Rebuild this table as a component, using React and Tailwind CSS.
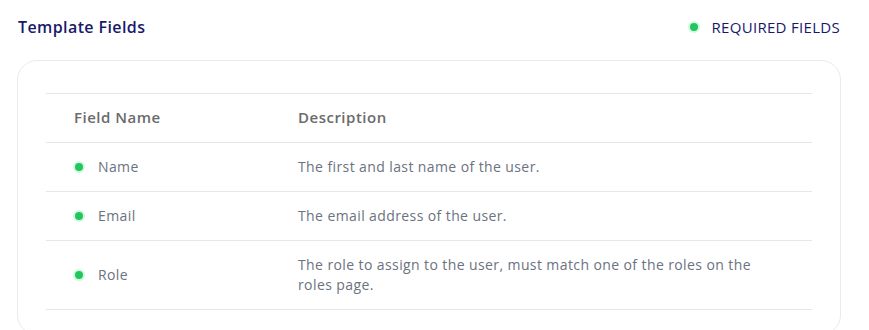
const fields = [
  { name: 'Name', description: 'The first and last name of the user.' },
  { name: 'Email', description: 'The email address of the user.' },
  {
    name: 'Role',
    description: 'The role to assign to the user, must match one of the roles on the roles page.',
  },
];

function Dot() {
  return <span className="inline-block w-2 h-2 rounded-full bg-[#22c55e] ring-2 ring-[#d1fadf]" />;
}

export default function App() {
  return (
    <div className="min-h-screen bg-white font-['Open_Sans',sans-serif] px-[17px] pt-[15px]">
      <div className="flex items-center justify-between w-[823px]">
        <h2 className="text-[16px] font-semibold tracking-[0.4px] text-[#171a6b] pl-px">Template Fields</h2>
        <div className="flex items-center gap-[14px] text-[15px] tracking-[0.3px] text-[#171a6b]">
          <Dot />
          <span>REQUIRED FIELDS</span>
        </div>
      </div>

      <div className="mt-[21px] w-[824px] rounded-[20px] border border-[#e6ebf1] px-[28px] pt-[32px] pb-6">
        <div className="border-t border-[#e5e7eb]">
          <div className="grid grid-cols-[224px_1fr] h-[49px] pb-[2px] items-center border-b border-[#e5e7eb] text-[15px] font-semibold tracking-[0.5px] text-[#6b6b6b]">
            <div className="pl-7">Field Name</div>
            <div className="pl-7">Description</div>
          </div>
          {fields.map((f) => (
            <div
              key={f.name}
              className="grid grid-cols-[224px_1fr] py-[14px] items-center border-b border-[#e5e7eb] text-[14px] leading-[20px] tracking-[0.4px] text-[#6b7280]"
            >
              <div className="pl-[29px] flex items-center gap-[15px]">
                <Dot />
                <span>{f.name}</span>
              </div>
              <div className="pl-7 max-w-[510px]">{f.description}</div>
            </div>
          ))}
        </div>
      </div>
    </div>
  );
}
